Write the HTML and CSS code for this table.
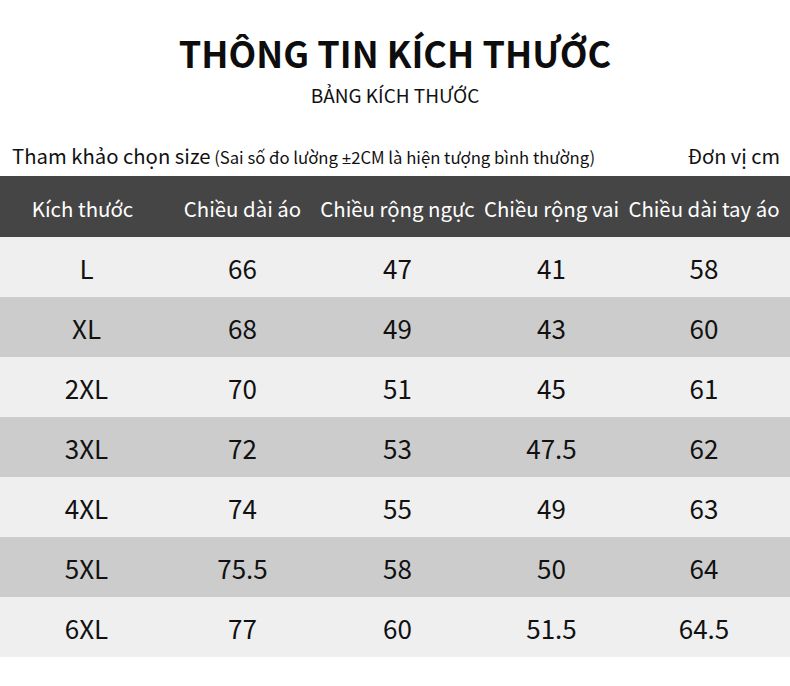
FILE: index.html
```html
<!DOCTYPE html>
<html lang="vi">
<head>
<meta charset="utf-8">
<link rel="stylesheet" href="styles.css">
</head>
<body>
<div class="page">
  <h1 class="title">THÔNG TIN KÍCH THƯỚC</h1>
  <div class="subtitle">BẢNG KÍCH THƯỚC</div>
  <div class="note">
    <div class="note-left"><span class="note-main">Tham khảo chọn size</span> <span class="note-small">(Sai số đo lường <span class="pm">±</span>2CM là hiện tượng bình thường)</span></div>
    <div class="note-right">Đơn vị cm</div>
  </div>
  <div class="table">
    <div class="row head"><div>Kích thước</div><div>Chiều dài áo</div><div>Chiều rộng ngực</div><div>Chiều rộng vai</div><div>Chiều dài tay áo</div></div>
    <div class="row light"><div class="size">L</div><div>66</div><div>47</div><div>41</div><div>58</div></div>
    <div class="row dark"><div class="size">XL</div><div>68</div><div>49</div><div>43</div><div>60</div></div>
    <div class="row light"><div class="size">2XL</div><div>70</div><div>51</div><div>45</div><div>61</div></div>
    <div class="row dark"><div class="size">3XL</div><div>72</div><div>53</div><div>47.5</div><div>62</div></div>
    <div class="row light"><div class="size">4XL</div><div>74</div><div>55</div><div>49</div><div>63</div></div>
    <div class="row dark"><div class="size">5XL</div><div>75.5</div><div>58</div><div>50</div><div>64</div></div>
    <div class="row light"><div class="size">6XL</div><div>77</div><div>60</div><div>51.5</div><div>64.5</div></div>
  </div>
</div>
</body>
</html>
```
FILE: styles.css
```css
html, body {
  margin: 0;
  padding: 0;
  background: #ffffff;
}
body {
  font-family: "Noto Sans CJK SC", "Noto Sans", sans-serif;
  color: #111111;
}
.page {
  width: 790px;
  padding-top: 26px;
}
.title {
  margin: 0;
  text-align: center;
  font-size: 36px;
  font-weight: 700;
  line-height: 52px;
  color: #0d0d0d;
}
.subtitle {
  text-align: center;
  font-size: 19px;
  line-height: 24px;
  margin-top: 5px;
}
.note {
  display: flex;
  justify-content: space-between;
  align-items: baseline;
  padding: 0 10px 0 12px;
  margin-top: 33px;
  height: 36px;
}
.note-main {
  font-size: 20.3px;
}
.note-small {
  font-size: 16.7px;
}
.pm {
  font-family: "Open Sans", "Noto Sans", sans-serif;
}
.note-right {
  font-size: 20px;
}
.table {
  display: flex;
  flex-direction: column;
}
.row {
  display: grid;
  grid-template-columns: 165px 155px 155px 153px 152px;
  height: 60px;
  align-items: center;
  font-size: 26px;
}
.row > div {
  display: flex;
  justify-content: center;
  white-space: nowrap;
}
.row .size {
  padding-left: 8px;
}
.row.head {
  height: 61px;
  background: #454545;
  color: #ffffff;
  font-size: 20.4px;
  padding-top: 3px;
  box-sizing: border-box;
}
.row.light { background: #efefef; }
.row.dark { background: #cccccc; }
```
